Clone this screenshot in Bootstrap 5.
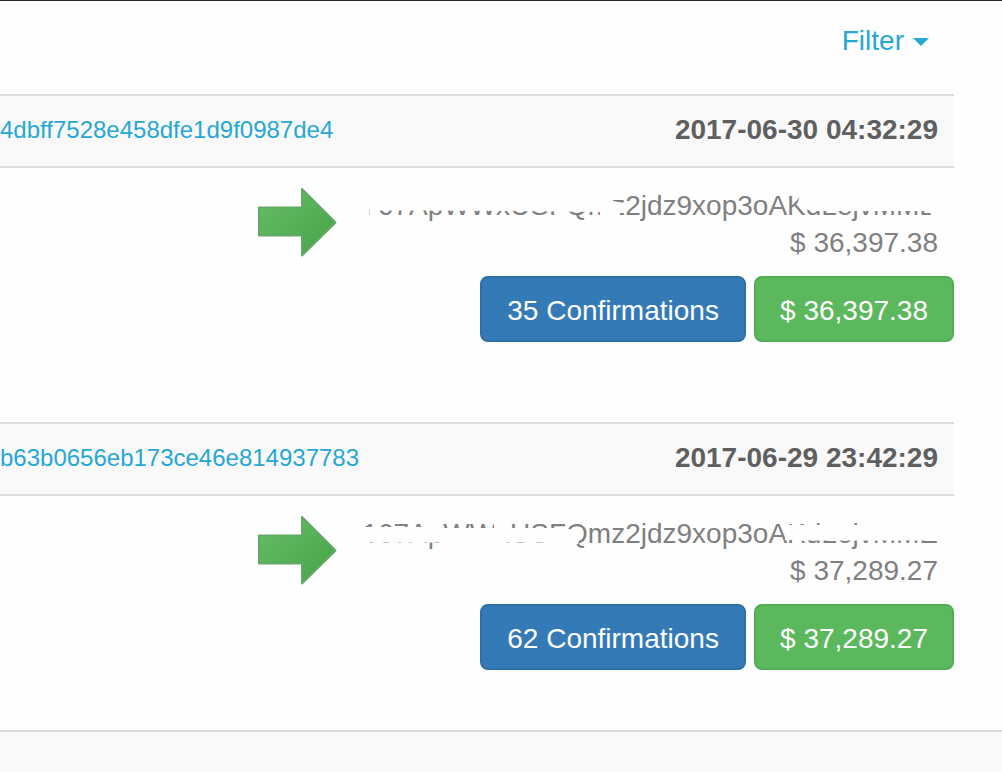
<!DOCTYPE html>
<html lang="en">
<head>
<meta charset="utf-8">
<meta name="viewport" content="width=device-width, initial-scale=1">
<title>Transactions</title>
<link href="https://cdn.jsdelivr.net/npm/bootstrap@5.3.0/dist/css/bootstrap.min.css" rel="stylesheet">
<style>
body{font-family:"Liberation Sans",Arial,sans-serif;font-size:28px;line-height:37px;color:#808080;background:#fefefe;border-top:1px solid #29252f;min-height:100vh}
a{color:#27a7d3;text-decoration:none}
.toolbar-row{height:93px;padding:21px 25px 0 0}
.filter-link::after{border-top-width:8px;border-left-width:8px;border-right-width:8px;margin-left:9px;vertical-align:4px}
.tx-list{padding-right:48px}
.tx + .tx{margin-top:80px}
.tx-head{height:74px;background:#f9f9f9;border-top:2px solid #dcdcdc;border-bottom:2px solid #dcdcdc;padding:0 16px 3px 0}
.tx-hash{font-size:24px}
.tx-time{color:#5f5f5f}
.tx-body{padding:19px 16px 15px 0;gap:24px}
.arrow-icon{width:80px;height:72px}
.addr-mask{position:absolute;top:0;left:0;width:100%;height:100%}
.btn-tx{height:66px;padding:3px 24px 0;border:2px solid;border-radius:8px;font-size:28px;color:#fff}
.btn-confirm{min-width:266px}
.btn-confirm,.btn-confirm:hover{background:#337ab7;border-color:#2e6fa9;color:#fff}
.btn-amount,.btn-amount:hover{background:#5cb85c;border-color:#53ad53;color:#fff}
.page-foot{margin-top:60px;background:#f9f9f9;border-top:2px solid #dcdcdc}
</style>
</head>
<body class="d-flex flex-column">
<svg width="0" height="0" class="position-absolute" aria-hidden="true">
  <defs>
    <linearGradient id="green" x1="0" y1="0" x2="1" y2="1">
      <stop offset="0" stop-color="#68bd69"/><stop offset=".5" stop-color="#56b157"/><stop offset="1" stop-color="#459e49"/>
    </linearGradient>
    <symbol id="arrow" viewBox="0 0 80 72">
      <path d="M1 20.500H44V2L77.500 35.500L44 68.500V48.500H1Z" fill="url(#green)" stroke="#62a965" stroke-width="2" stroke-linejoin="round"/>
    </symbol>
  </defs>
</svg>

<nav class="toolbar-row d-flex justify-content-end">
  <div class="dropdown me-5"><a class="filter-link dropdown-toggle" href="#" role="button" data-bs-toggle="dropdown">Filter</a></div>
</nav>

<main class="tx-list">
  <section class="tx">
    <header class="tx-head d-flex justify-content-between align-items-center">
      <a class="tx-hash" href="#">4dbff7528e458dfe1d9f0987de4</a>
      <strong class="tx-time">2017-06-30 04:32:29</strong>
    </header>
    <div class="tx-body d-flex justify-content-end">
      <svg class="arrow-icon" aria-hidden="true"><use href="#arrow"/></svg>
      <div class="text-end">
        <div class="position-relative">167ApWWxUSFQmz2jdz9xop3oAKdLejvMME
          <svg class="addr-mask" viewBox="0 0 576 37" preserveAspectRatio="none" aria-hidden="true">
            <path fill="#fefefe" d="M0 9H46V4H204V9H219V4H251V14L262 16V20L258 24L258 30H238V25L150 24L60 23.500H11V30H16V24H11V30H8V23H7V30H0ZM440 5H576V29H569V24H450L443 22L436 15Z"/>
            <path fill="#fefefe" d="M0 22H7.500V30H0ZM11 22H16V30H11Z"/>
          </svg>
        </div>
        <div>$ 36,397.38</div>
      </div>
    </div>
    <div class="d-flex justify-content-end gap-2">
      <button type="button" class="btn btn-tx btn-confirm">35 Confirmations</button>
      <button type="button" class="btn btn-tx btn-amount">$ 36,397.38</button>
    </div>
  </section>

  <section class="tx">
    <header class="tx-head d-flex justify-content-between align-items-center">
      <a class="tx-hash" href="#">b63b0656eb173ce46e814937783</a>
      <strong class="tx-time">2017-06-29 23:42:29</strong>
    </header>
    <div class="tx-body d-flex justify-content-end">
      <svg class="arrow-icon" aria-hidden="true"><use href="#arrow"/></svg>
      <div class="text-end">
        <div class="position-relative">167ApWWxUSFQmz2jdz9xop3oAKdLejvMME
          <svg class="addr-mask" viewBox="0 0 576 37" preserveAspectRatio="none" aria-hidden="true">
            <path fill="#fefefe" d="M0 12H60L64 9H78V13H132V6H148V13H203L215 16L219 20L216 29H187V27.500H140V30H78V27.500H0ZM425 10H459V5H490V10H500V5H576V25.500H440V29H431V25H423Z"/>
            <path fill="#fefefe" d="M0 22H7.500V30H0ZM11 22H16V30H11Z"/>
          </svg>
        </div>
        <div>$ 37,289.27</div>
      </div>
    </div>
    <div class="d-flex justify-content-end gap-2">
      <button type="button" class="btn btn-tx btn-confirm">62 Confirmations</button>
      <button type="button" class="btn btn-tx btn-amount">$ 37,289.27</button>
    </div>
  </section>
</main>
<footer class="page-foot flex-grow-1"></footer>
<script src="https://cdn.jsdelivr.net/npm/bootstrap@5.3.0/dist/js/bootstrap.bundle.min.js"></script>
</body>
</html>
